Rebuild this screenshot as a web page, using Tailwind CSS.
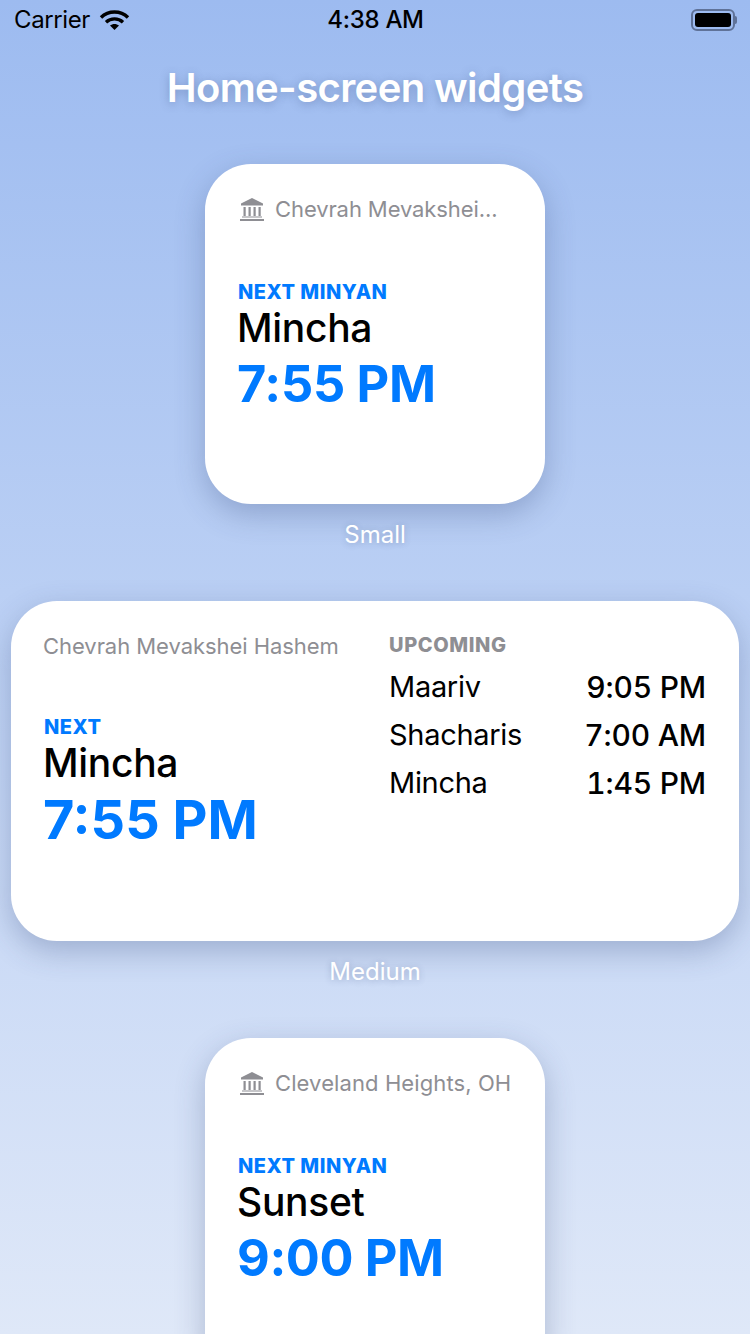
<!DOCTYPE html>
<html lang="en">
<head>
    <meta charset="UTF-8">
    <meta name="viewport" content="width=device-width, initial-scale=1.0">
    <title>Home-screen widgets</title>
    <script src="https://cdn.jsdelivr.net/npm/@tailwindcss/browser@4"></script>
</head>
<body class="font-['Inter',sans-serif]">
<div class="w-[750px] h-[1334px] overflow-hidden flex flex-col items-center bg-gradient-to-b from-[#9dbbf0] to-[#dfe8f8]">

    <!-- status bar -->
    <div class="w-full h-[40px] shrink-0 pl-[14px] pr-[13px] grid grid-cols-3 items-center text-black">
        <div class="flex items-center gap-[10px] text-[24px] tracking-[-0.4px] leading-none">
            <span>Carrier</span>
            <svg width="31" height="22" viewBox="0 0 31 22" fill="none" stroke="#000" stroke-width="3.4" class="-ml-[1px]">
                <path d="M2 8.5C9.5 1.2 21.5 1.2 29 8.5"/>
                <path d="M7 13.2C11.8 8.8 19.2 8.8 24 13.2"/>
                <path d="M15.5 21L11 16.6C13.5 14.4 17.5 14.4 20 16.6Z" fill="#000" stroke="none"/>
            </svg>
        </div>
        <div class="text-center text-[24px] font-medium tracking-[-0.3px] leading-none">4:38 AM</div>
        <div class="flex justify-end items-center">
            <div class="w-[44px] h-[22px] rounded-[6px] border-2 border-[#5f7298] p-[2px]">
                <div class="w-full h-full rounded-[3px] bg-black"></div>
            </div>
            <div class="w-[2px] h-[8px] rounded-r-sm bg-[#5f7298]"></div>
        </div>
    </div>

    <h1 class="mt-[24px] h-[48px] leading-[48px] text-[40px] font-semibold tracking-[-0.6px] text-white [text-shadow:0_2px_10px_rgba(50,70,120,0.35)]">Home-screen widgets</h1>

    <!-- small -->
    <div class="mt-[52px] w-[340px] h-[340px] shrink-0 bg-white rounded-[46px] shadow-[0_10px_30px_rgba(50,70,120,0.3)] pl-[33px] pr-[20px] pt-[32px]">
        <div class="flex items-center gap-[11px] h-[26px] pl-[2px] text-[#8e8e93] text-[22px]">
            <svg width="24" height="24" viewBox="0 0 24 24" fill="#8e8e93" class="shrink-0">
                <path d="M12 1L23 6.5V8.5H1V6.5Z"/>
                <rect x="3.5" y="10" width="2.2" height="9"/><rect x="8.5" y="10" width="2.2" height="9"/><rect x="13.5" y="10" width="2.2" height="9"/><rect x="18.5" y="10" width="2.2" height="9"/>
                <rect x="2" y="19.5" width="20" height="1"/><rect x="0" y="22" width="24" height="2"/>
            </svg>
            <span class="whitespace-nowrap tracking-[-0.1px]">Chevrah Mevakshei...</span>
        </div>
        <div class="mt-[58px] text-[#007aff] text-[20px] font-extrabold tracking-[0.5px] leading-[24px] h-[24px]">NEXT MINYAN</div>
        <div class="-ml-[1px] text-black text-[39px] font-medium leading-[48px] h-[48px] tracking-[-0.3px]">Mincha</div>
        <div class="-ml-[1px] text-[#007aff] text-[50.5px] font-[650] leading-[62px] mt-[1px] tracking-[-0.3px]">7:55 PM</div>
    </div>
    <div class="mt-[16px] h-[30px] leading-[30px] text-white text-[24px] [text-shadow:0_1px_6px_rgba(50,70,120,0.3)]">Small</div>

    <!-- medium -->
    <div class="mt-[51px] w-[728px] h-[340px] shrink-0 bg-white rounded-[46px] shadow-[0_10px_30px_rgba(50,70,120,0.3)] pl-[32px] pr-[33px] pt-[32px] flex">
        <div class="w-[346px] shrink-0">
            <div class="h-[27px] leading-[27px] text-[#8e8e93] text-[22px] whitespace-nowrap tracking-[-0.05px]">Chevrah Mevakshei Hashem</div>
            <div class="mt-[55px] pl-[1px] text-[#007aff] text-[20px] font-extrabold tracking-[0.5px] leading-[24px] h-[24px]">NEXT</div>
            <div class="text-black text-[39px] font-medium leading-[48px] h-[48px] tracking-[-0.3px]">Mincha</div>
            <div class="text-[#007aff] text-[54px] font-[650] leading-[62px] mt-[2px]">7:55 PM</div>
        </div>
        <div class="flex-1">
            <div class="h-[24px] leading-[24px] text-[#8e8e93] text-[20px] font-extrabold tracking-[0.6px]">UPCOMING</div>
            <div class="mt-[6px] flex flex-col text-[29px] text-black">
                <div class="h-[48px] leading-[48px] flex justify-between"><span class="tracking-[-0.3px]">Maariv</span><span class="text-[30px] font-medium tabular-nums tracking-[-0.2px]">9:05 PM</span></div>
                <div class="h-[48px] leading-[48px] flex justify-between"><span class="tracking-[-0.3px]">Shacharis</span><span class="text-[30px] font-medium tabular-nums tracking-[-0.2px]">7:00 AM</span></div>
                <div class="h-[48px] leading-[48px] flex justify-between"><span class="tracking-[-0.3px]">Mincha</span><span class="text-[30px] font-medium tabular-nums tracking-[-0.2px]">1:45 PM</span></div>
            </div>
        </div>
    </div>
    <div class="mt-[16px] h-[30px] leading-[30px] text-white text-[24px] [text-shadow:0_1px_6px_rgba(50,70,120,0.3)]">Medium</div>

    <!-- small, location -->
    <div class="mt-[51px] w-[340px] h-[340px] shrink-0 bg-white rounded-[46px] shadow-[0_10px_30px_rgba(50,70,120,0.3)] pl-[33px] pr-[20px] pt-[32px]">
        <div class="flex items-center gap-[11px] h-[26px] pl-[2px] text-[#8e8e93] text-[22px]">
            <svg width="24" height="24" viewBox="0 0 24 24" fill="#8e8e93" class="shrink-0">
                <path d="M12 1L23 6.5V8.5H1V6.5Z"/>
                <rect x="3.5" y="10" width="2.2" height="9"/><rect x="8.5" y="10" width="2.2" height="9"/><rect x="13.5" y="10" width="2.2" height="9"/><rect x="18.5" y="10" width="2.2" height="9"/>
                <rect x="2" y="19.5" width="20" height="1"/><rect x="0" y="22" width="24" height="2"/>
            </svg>
            <span class="whitespace-nowrap tracking-[0.1px]">Cleveland Heights, OH</span>
        </div>
        <div class="mt-[58px] text-[#007aff] text-[20px] font-extrabold tracking-[0.5px] leading-[24px] h-[24px]">NEXT MINYAN</div>
        <div class="-ml-[1px] text-black text-[39px] font-medium leading-[48px] h-[48px] tracking-[-0.3px]">Sunset</div>
        <div class="-ml-[1px] text-[#007aff] text-[50.5px] font-[650] leading-[62px] mt-[1px] tracking-[-0.4px]">9:00 PM</div>
    </div>
</div>
</body>
</html>
